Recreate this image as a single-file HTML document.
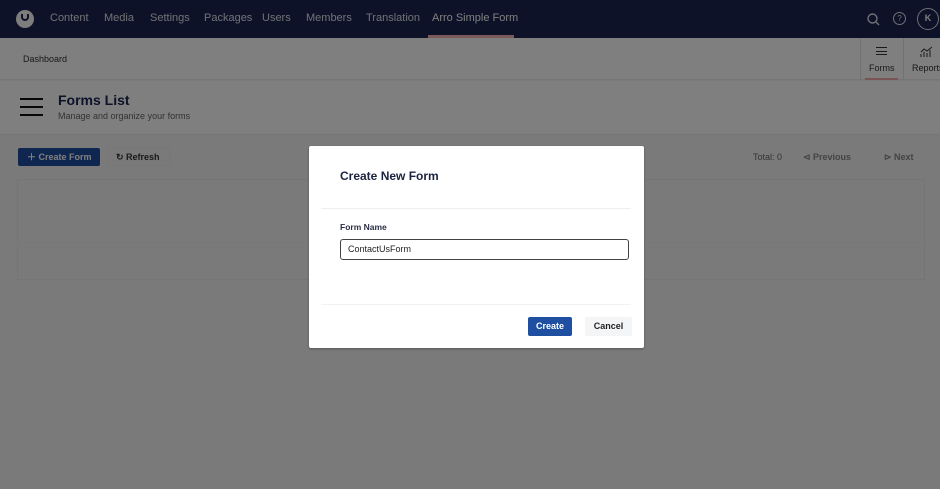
<!DOCTYPE html>
<html><head><meta charset="utf-8"><style>
*{box-sizing:border-box;margin:0;padding:0}
html,body{width:940px;height:489px;overflow:hidden}
body{background:#f4f4f4;font-family:"Liberation Sans",sans-serif;position:relative}
.nav{position:absolute;left:0;top:0;width:940px;height:38px;background:#1b2550}
.nav span{position:absolute;top:12px;font-size:11px;color:#e0e2ea}
.hdr{position:absolute;top:38px;left:0;width:940px;height:42px;background:#fefefe;border-bottom:1px solid #ebebeb}
.sub{position:absolute;top:81px;left:0;width:940px;height:54px;background:#fefefe;border-bottom:1px solid #ececec}
.a{position:absolute}
.ov{position:absolute;left:0;top:0;width:940px;height:489px;background:rgba(0,0,0,0.5)}
</style></head><body>
<div class="nav">
<div class="a" style="left:16px;top:10px;width:18px;height:18px;border-radius:50%;background:#fbfbfb"></div>
<div class="a" style="left:21px;top:14px;width:8px;height:7px;border:2px solid #1b2550;border-top:none;border-radius:0 0 4px 4px"></div>
<span style="left:50px">Content</span><span style="left:104px">Media</span><span style="left:150px">Settings</span><span style="left:204px">Packages</span><span style="left:262px">Users</span><span style="left:306px">Members</span><span style="left:366px">Translation</span><span style="left:432px;color:#fff">Arro Simple Form</span>
<div class="a" style="left:428px;top:35px;width:86px;height:3px;background:#f5b5b0"></div>
<svg class="a" style="left:866px;top:12px" width="15" height="15" viewBox="0 0 15 15"><circle cx="6.5" cy="6.5" r="4.5" fill="none" stroke="#e0e2ea" stroke-width="1.4"/><path d="M10 10l3 3" stroke="#e0e2ea" stroke-width="1.4"/></svg>
<div class="a" style="left:893px;top:12px;width:13px;height:13px;border:1.3px solid #e0e2ea;border-radius:50%;font-size:8px;color:#e0e2ea;text-align:center;line-height:11px">?</div>
<div class="a" style="left:917px;top:8px;width:22px;height:22px;border:1.3px solid #e0e2ea;border-radius:50%;font-size:9px;font-weight:bold;color:#fff;text-align:center;line-height:19px">K</div>
</div>
<div class="hdr">
<span class="a" style="left:23px;top:16px;font-size:9px;color:#333">Dashboard</span>
<div class="a" style="left:860px;top:0;width:1px;height:42px;background:#e5e5e5"></div>
<div class="a" style="left:903px;top:0;width:1px;height:42px;background:#e5e5e5"></div>
<div class="a" style="left:876px;top:9px;width:11px;height:8px;border-top:1.3px solid #333;border-bottom:1.3px solid #333"></div>
<div class="a" style="left:876px;top:12.5px;width:11px;height:1.3px;background:#333"></div>
<span class="a" style="left:869px;top:25px;font-size:9px;color:#333">Forms</span>
<div class="a" style="left:865px;top:40px;width:33px;height:2px;background:#f0a8a8"></div>
<svg class="a" style="left:920px;top:8px" width="14" height="12" viewBox="0 0 14 12"><path d="M1 11V8M4 11V6M7 11V7M10 11V4M1 6l3-3 3 2 5-4" stroke="#333" fill="none" stroke-width="1"/></svg>
<span class="a" style="left:912px;top:25px;font-size:9px;color:#333">Reports</span>
</div>
<div class="sub">
<div class="a" style="left:20px;top:17px;width:23px;height:18px;border-top:2px solid #111;border-bottom:2px solid #111"></div>
<div class="a" style="left:20px;top:25px;width:23px;height:2px;background:#111"></div>
<span class="a" style="left:58px;top:11px;font-size:14px;font-weight:bold;color:#1b2550">Forms List</span>
<span class="a" style="left:58px;top:30px;font-size:9px;color:#666">Manage and organize your forms</span>
</div>
<div class="a" style="left:18px;top:148px;width:82px;height:18px;background:#1f4fa0;border-radius:2px;color:#fff;font-size:9px;font-weight:bold;line-height:18px;padding-left:9px">＋ Create Form</div>
<div class="a" style="left:107px;top:148px;width:64px;height:18px;border:1px solid #eee;color:#333;font-size:9px;font-weight:bold;line-height:17px;padding-left:8px">↻ Refresh</div>
<span class="a" style="left:753px;top:152px;font-size:9px;color:#666">Total: 0</span>
<span class="a" style="left:803px;top:152px;font-size:9px;font-weight:bold;color:#888">⊲ Previous</span>
<span class="a" style="left:884px;top:152px;font-size:9px;font-weight:bold;color:#888">⊳ Next</span>
<div class="a" style="left:17px;top:179px;width:908px;height:101px;border:1px solid #ebebeb"></div>
<div class="a" style="left:17px;top:242px;width:908px;height:1px;background:#eee"></div>
<div class="ov"></div>
<div class="a" style="left:309px;top:146px;width:335px;height:202px;background:#fff;border-radius:2px;box-shadow:0 1px 2px rgba(0,0,0,.3)">
<span class="a" style="left:31px;top:23px;font-size:12px;font-weight:bold;color:#1c2340">Create New Form</span>
<div class="a" style="left:12px;top:62px;width:310px;height:1px;background:#eee"></div>
<span class="a" style="left:31px;top:76px;font-size:8.5px;font-weight:bold;color:#2a2f45">Form Name</span>
<div class="a" style="left:31px;top:93px;width:289px;height:21px;border:1.5px solid #444;border-radius:3px;font-size:9px;color:#222;line-height:18px;padding-left:7px">ContactUsForm</div>
<div class="a" style="left:12px;top:158px;width:310px;height:1px;background:#f2f2f2"></div>
<div class="a" style="left:219px;top:171px;width:44px;height:19px;background:#1f4fa0;border-radius:2px;color:#fff;font-size:9px;font-weight:bold;text-align:center;line-height:19px">Create</div>
<div class="a" style="left:276px;top:171px;width:47px;height:19px;background:#f4f5f7;border-radius:2px;color:#222;font-size:9px;font-weight:bold;text-align:center;line-height:19px">Cancel</div>
</div>
</body></html>
